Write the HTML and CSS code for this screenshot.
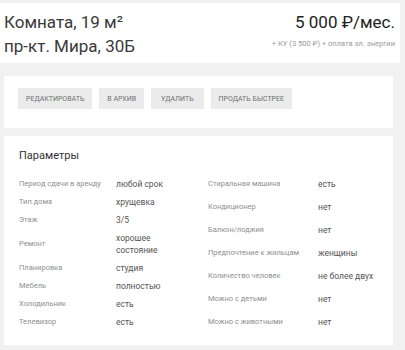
FILE: index.html
```html
<!DOCTYPE html>
<html lang="ru">
<head>
  <meta charset="UTF-8">
  <meta name="viewport" content="width=device-width, initial-scale=1">
  <title>Комната, 19 м² — пр-кт. Мира, 30Б</title>
  <link rel="stylesheet" href="styles.css">
</head>
<body>
  <div class="head">
    <div class="head-left">
      <div class="title">Комната, 19 м²</div>
      <div class="title">пр-кт. Мира, 30Б</div>
    </div>
    <div class="head-right">
      <div class="price">5 000 ₽/мес.</div>
      <div class="extra">+ КУ (3 500 ₽) + оплата эл. энергии</div>
    </div>
  </div>

  <!-- actions -->
  <div class="card actions">
    <button class="btn">Редактировать</button>
    <button class="btn">В архив</button>
    <button class="btn btn-wide">Удалить</button>
    <button class="btn">Продать быстрее</button>
  </div>

  <!-- params -->
  <div class="card params">
    <h2>Параметры</h2>
    <div class="params-grid">
      <div class="col col-left">
        <div class="row"><span class="label">Период сдачи в аренду</span><span class="value">любой срок</span></div>
        <div class="row"><span class="label">Тип дома</span><span class="value">хрущевка</span></div>
        <div class="row"><span class="label">Этаж</span><span class="value">3/5</span></div>
        <div class="row"><span class="label">Ремонт</span><span class="value">хорошее<br>состояние</span></div>
        <div class="row"><span class="label">Планировка</span><span class="value">студия</span></div>
        <div class="row"><span class="label">Мебель</span><span class="value">полностью</span></div>
        <div class="row"><span class="label">Холодильник</span><span class="value">есть</span></div>
        <div class="row"><span class="label">Телевизор</span><span class="value">есть</span></div>
      </div>
      <div class="col col-right">
        <div class="row"><span class="label">Стиральная машина</span><span class="value">есть</span></div>
        <div class="row"><span class="label">Кондиционер</span><span class="value">нет</span></div>
        <div class="row"><span class="label">Балкон/лоджия</span><span class="value">нет</span></div>
        <div class="row"><span class="label">Предпочтение к жильцам</span><span class="value">женщины</span></div>
        <div class="row"><span class="label">Количество человек</span><span class="value">не более двух</span></div>
        <div class="row"><span class="label">Можно с детьми</span><span class="value">нет</span></div>
        <div class="row"><span class="label">Можно с животными</span><span class="value">нет</span></div>
      </div>
    </div>
  </div>
</body>
</html>
```

FILE: styles.css
```css
body {
  margin: 0;
  background: #f0f1f0;
  font-family: Roboto, 'Liberation Sans', sans-serif;
  color: #333;
}

.head {
  background: #fff;
  margin: 3px 5px 0 0;
  padding: 7px 5px 5px 4px;
  display: flex;
  justify-content: space-between;
}

.title {
  font-size: 17px;
  line-height: 24px;
  color: #3a3a3a;
}

.head-right {
  text-align: right;
}

.price {
  font-size: 17px;
  line-height: 24px;
  color: #222;
}

.extra {
  font-size: 7.5px;
  line-height: 14px;
  margin-top: 3px;
  color: #9a9a9a;
}

.card {
  background: #fff;
  margin: 0 12px 0 4px;
}

.actions {
  margin-top: 13px;
  padding: 12px 14px 19px;
  display: flex;
  gap: 7px;
}

.btn {
  height: 21px;
  padding: 0 8px;
  border: none;
  background: #ebebeb;
  color: #707070;
  font-family: Roboto, 'Liberation Sans', sans-serif;
  font-size: 7px;
  font-weight: 400;
  text-transform: uppercase;
}

.btn-wide {
  padding: 0 10px;
}

.params {
  margin-top: 8px;
  padding: 13px 14px 17px 15px;
}

h2 {
  margin: 0 0 15px 0;
  font-size: 11px;
  line-height: 14px;
  font-weight: 400;
  color: #333;
}

.params-grid {
  display: grid;
  grid-template-columns: 189px 1fr;
}

.col {
  display: flex;
  flex-direction: column;
  gap: 6px;
}

.col-right {
  justify-content: space-between;
}

.row {
  display: flex;
  align-items: center;
  line-height: 12px;
}

.label {
  font-size: 7.5px;
  color: #8f8f8f;
}

.value {
  font-size: 8.5px;
  color: #555;
}

.col-left .label {
  width: 97px;
}

.col-right .label {
  width: 110px;
}
```
